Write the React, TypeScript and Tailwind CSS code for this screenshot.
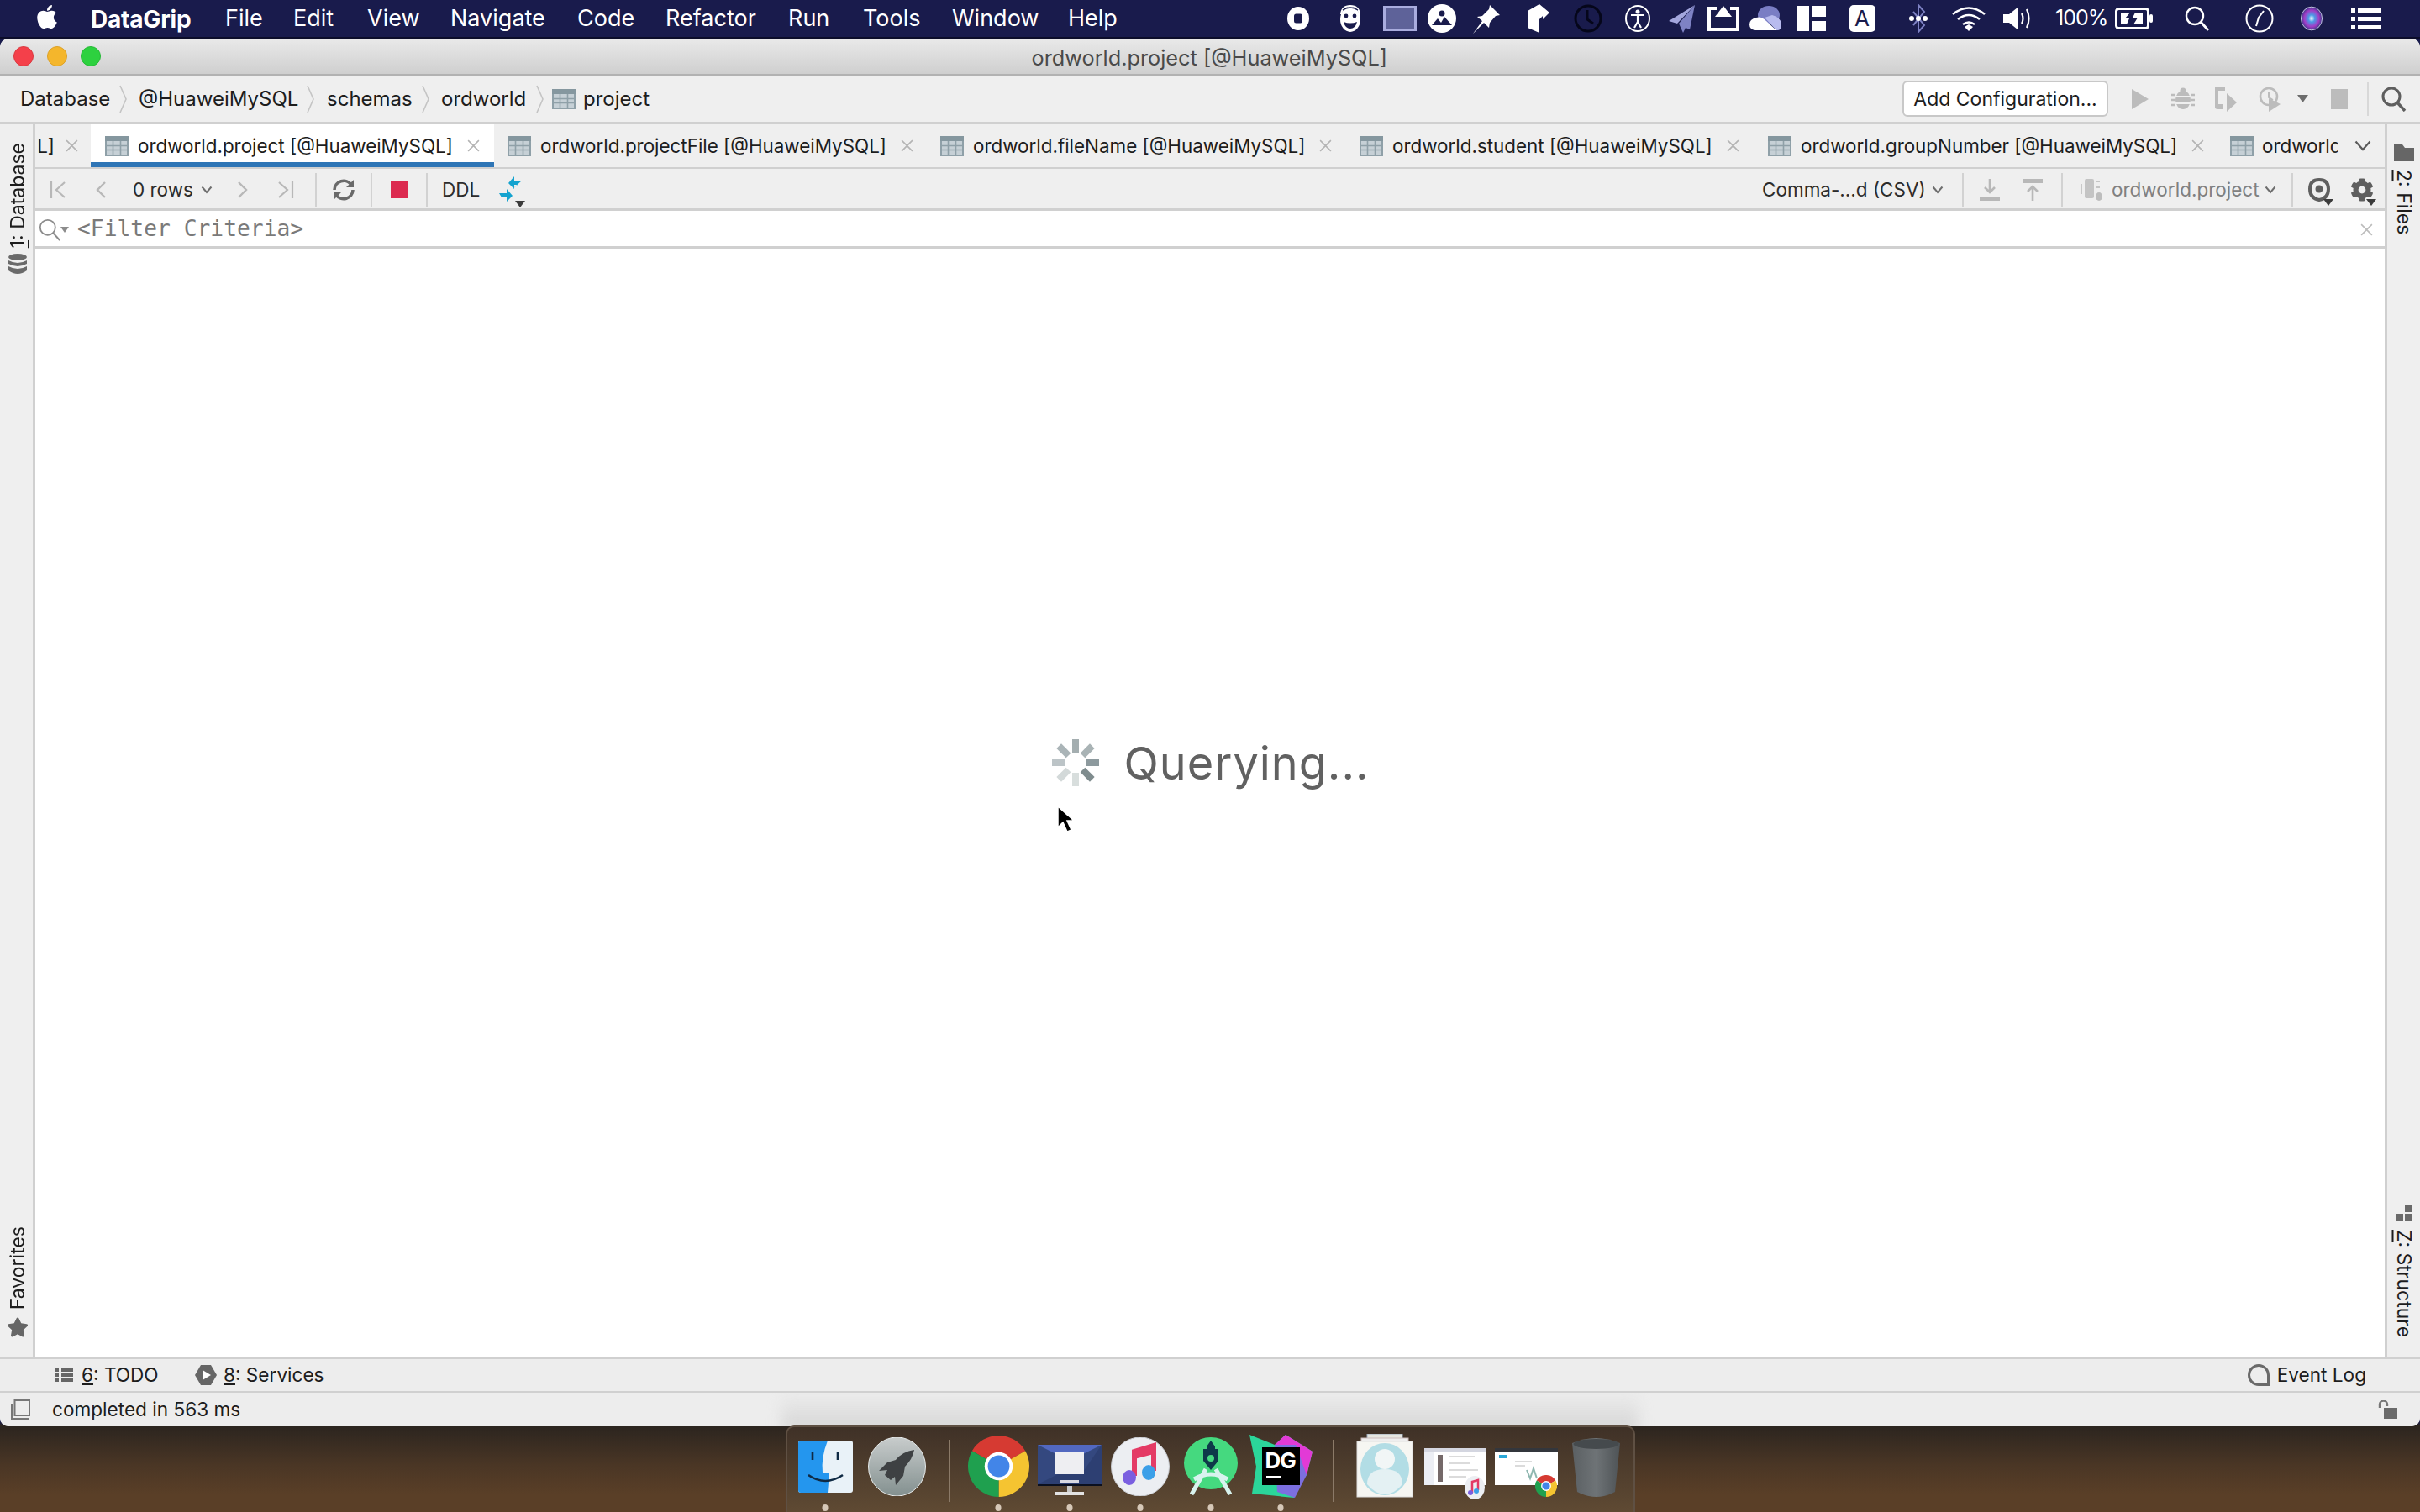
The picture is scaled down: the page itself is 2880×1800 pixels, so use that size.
import React from "react";
import { FaApple, FaStar, FaCog } from "react-icons/fa";

const TableIcon = () => (
  <svg width="28" height="24" viewBox="0 0 28 24" className="shrink-0">
    <rect width="28" height="24" fill="#c6d0d6" />
    <rect width="28" height="6" fill="#85979f" />
    <rect x="0" y="6" width="2" height="18" fill="#8fa0a8" />
    <rect x="26" y="6" width="2" height="18" fill="#8fa0a8" />
    <rect y="22" width="28" height="2" fill="#8fa0a8" />
    <path d="M2 11.5h24M2 16.5h24M9.5 6v16M18.5 6v16" stroke="#8fa0a8" strokeWidth="1.6" />
  </svg>
);
const Close = ({ c = "#b4b4b4" }: { c?: string }) => (
  <svg width="17" height="17" viewBox="0 0 16 16" className="shrink-0">
    <path d="M2 2l12 12M14 2L2 14" stroke={c} strokeWidth="1.5" />
  </svg>
);
const Chev = ({ c = "#6e6e6e" }: { c?: string }) => (
  <svg width="14" height="10" viewBox="0 0 14 10" className="shrink-0">
    <path d="M1.5 1.5L7 8l5.5-6.5" fill="none" stroke={c} strokeWidth="2" />
  </svg>
);
const Crumb = () => (
  <svg width="10" height="34" viewBox="0 0 10 34" className="shrink-0">
    <path d="M1 1l7 16-7 16" fill="none" stroke="#c4c4c4" strokeWidth="1.6" />
  </svg>
);
const Sep = () => <div className="w-[2px] h-[40px] bg-[#d2d2d2] shrink-0" />;
const Caret = () => (
  <svg width="12" height="8" viewBox="0 0 12 8" className="absolute right-[-3px] bottom-[-5px]">
    <path d="M0 0h12L6 8z" fill="#3c3c3c" />
  </svg>
);

function Tab({ w, label, active }: { w: string; label: string; active?: boolean }) {
  return (
    <div className={`${w} h-full shrink-0 flex items-center relative overflow-hidden ${active ? "bg-white pl-[17px]" : "pl-[16px]"}`}>
      <TableIcon />
      <span className="ml-[11px] whitespace-nowrap text-[22.4px] text-[#1d1d1d]">{label}</span>
      <div className="ml-[16px] shrink-0"><Close /></div>
      {active && <div className="absolute left-0 right-0 bottom-0 h-[6px] bg-[#2e75b6]" />}
    </div>
  );
}

const Slot = ({ w, children }: { w: string; children: React.ReactNode }) => (
  <div className={`${w} shrink-0 flex justify-center items-center`}>{children}</div>
);
const Magnifier = ({ s, c, w }: { s: number; c: string; w: number }) => (
  <svg width={s} height={s} viewBox="0 0 30 30" className="shrink-0">
    <circle cx="12" cy="12" r="10" fill="none" stroke={c} strokeWidth={w} />
    <path d="M19 19l9 10" fill="none" stroke={c} strokeWidth={w + 0.4} />
  </svg>
);

function Menu() {
  const items: [string, string][] = [
    ["File", "w-[81px]"], ["Edit", "w-[88px]"], ["View", "w-[99px]"], ["Navigate", "w-[151px]"], ["Code", "w-[105px]"],
    ["Refactor", "w-[146px]"], ["Run", "w-[89px]"], ["Tools", "w-[106px]"], ["Window", "w-[138px]"], ["Help", "w-[100px]"],
  ];
  return (
    <div className="h-[46px] shrink-0 bg-[#191b4c] border-b-2 border-[#0c0d2a] flex items-center text-white text-[27px] relative">
      <div className="w-[108px] pl-[40px] shrink-0 -mt-[5px]"><FaApple size={32} /></div>
      <div className="w-[160px] shrink-0 font-bold text-[28px] tracking-[-0.2px] pt-[1px]">DataGrip</div>
      {items.map(([t, w]) => <div key={t} className={`${w} shrink-0 pt-[1px]`}>{t}</div>)}
      <div className="w-[143px] shrink-0" />
      <Slot w="w-[62px]"><svg width="26" height="28" viewBox="0 0 26 28"><ellipse cx="13" cy="14" rx="13" ry="14" fill="#fff" /><rect x="8" y="8.5" width="10" height="11" rx="2.5" fill="#191b4c" /></svg></Slot>
      <Slot w="w-[62px]"><svg width="28" height="34" viewBox="0 0 28 34"><ellipse cx="14" cy="18" rx="12" ry="15" fill="#fff" /><path d="M3 12q1-10 11-10t11 10" fill="none" stroke="#fff" strokeWidth="2" /><path d="M5 7q9-6 18 0" fill="none" stroke="#191b4c" strokeWidth="1.5" /><circle cx="9" cy="14" r="2.4" fill="#191b4c" /><circle cx="19" cy="14" r="2.4" fill="#191b4c" /><path d="M6 21q8 3 16 0q-2 8-8 8t-8-8z" fill="#191b4c" /></svg></Slot>
      <Slot w="w-[56px]"><div className="w-[40px] h-[30px] bg-[#5e6299] border-[3px] border-[#a9acde]" /></Slot>
      <Slot w="w-[44px]"><svg width="34" height="34" viewBox="0 0 34 34"><circle cx="17" cy="17" r="17" fill="#fff" /><circle cx="17" cy="11" r="3.5" fill="#191b4c" /><path d="M5 25l7-8 4 5 4-7 9 10z" fill="#191b4c" /></svg></Slot>
      <Slot w="w-[62px]"><svg width="36" height="36" viewBox="0 0 36 36"><path d="M22 2l12 12-5 1-7 8-1 6-6-6-13 13 11-15-6-5 6-1 8-8z" fill="#fff" /></svg></Slot>
      <Slot w="w-[60px]"><svg width="28" height="34" viewBox="0 0 28 34"><path d="M16 0l12 10-8 8v-4l-4 4v16L2 28V8z" fill="#fff" /></svg></Slot>
      <Slot w="w-[60px]"><svg width="34" height="34" viewBox="0 0 34 34"><circle cx="17" cy="17" r="15" fill="none" stroke="#05061a" strokeWidth="3" /><path d="M16 7v11l7 5" fill="none" stroke="#05061a" strokeWidth="3" /></svg></Slot>
      <Slot w="w-[58px]"><svg width="30" height="32" viewBox="0 0 30 32"><ellipse cx="15" cy="16" rx="14" ry="15" fill="none" stroke="#fff" strokeWidth="2" /><circle cx="15" cy="8" r="2.5" fill="#fff" /><path d="M7 12h16M15 12v8M15 20l-4 7M15 20l4 7" fill="none" stroke="#fff" strokeWidth="2.2" /></svg></Slot>
      <Slot w="w-[48px]"><svg width="32" height="34" viewBox="0 0 32 34"><path d="M31 1L0 20l10 3z" fill="#a3a6dd" /><path d="M31 1L12 23l5 11 3-6 5 2z" fill="#7e82c4" /></svg></Slot>
      <Slot w="w-[50px]"><svg width="38" height="30" viewBox="0 0 38 30"><path d="M11 3H2v25h34V3h-9" fill="none" stroke="#fff" strokeWidth="4" /><path d="M19 0l10 13H9z" fill="#fff" /></svg></Slot>
      <Slot w="w-[52px]"><svg width="40" height="30" viewBox="0 0 40 30"><ellipse cx="23" cy="11" rx="13" ry="11" fill="#7a7ec4" /><path d="M7 29q-7-1-7-7t8-8q6-2 12 4l12 11z" fill="#fff" /><path d="M18 14l9-3q11 3 11 11t-6 7z" fill="#b8bbee" /></svg></Slot>
      <Slot w="w-[56px]"><div className="flex gap-[4px] h-[30px]"><div className="w-[14px] bg-white" /><div className="flex flex-col gap-[5px] w-[16px]"><div className="h-[13px] bg-white" /><div className="h-[12px] bg-white" /></div></div></Slot>
      <Slot w="w-[64px]"><div className="w-[31px] h-[32px] rounded-[5px] bg-white text-[#191b4c] text-[26px] leading-[32px] text-center">A</div></Slot>
      <Slot w="w-[70px]"><svg width="24" height="34" viewBox="0 0 24 34"><path d="M6 9l13 16-7 8V1l7 8L6 25" fill="none" stroke="#7e82c4" strokeWidth="2" /><circle cx="4" cy="17" r="3" fill="#fff" /><circle cx="12" cy="17" r="3" fill="#fff" /><circle cx="20" cy="17" r="3" fill="#fff" /></svg></Slot>
      <Slot w="w-[50px]"><svg width="42" height="32" viewBox="0 0 42 32"><path d="M2 11q19-15 38 0M8 17q13-10 26 0M14 23q7-5 14 0" fill="none" stroke="#fff" strokeWidth="2.6" /><path d="M16 26l5-3 5 3-5 5z" fill="#fff" /></svg></Slot>
      <Slot w="w-[66px]"><svg width="34" height="28" viewBox="0 0 34 28"><path d="M0 9h7l10-8v26L7 19H0z" fill="#fff" /><path d="M22 8q3 6 0 12M28 3q5 11 0 22" fill="none" stroke="#fff" strokeWidth="2.2" /></svg></Slot>
      <div className="ml-[12px] w-[61px] shrink-0 text-[25px] tracking-[-1px] whitespace-nowrap">100%</div>
      <div className="ml-[10px] w-[45px] shrink-0 flex">
        <svg width="45" height="26" viewBox="0 0 45 26"><rect x="1.5" y="1.5" width="38" height="23" rx="3" fill="none" stroke="#fff" strokeWidth="3" /><rect x="41" y="8" width="4" height="10" rx="2" fill="#fff" /><path d="M7 6h11l-6 7h5l-3 7H7zM33 6H24l-3 6h6l-5 8h11z" fill="#fff" /></svg>
      </div>
      <div className="ml-[28px] w-[50px] shrink-0 flex justify-center"><Magnifier s={30} c="#fff" w={2.4} /></div>
      <Slot w="w-[98px]"><svg width="34" height="34" viewBox="0 0 34 34"><circle cx="17" cy="17" r="15.5" fill="none" stroke="#fff" strokeWidth="2" /><path d="M13 26l3-10 6-8" fill="none" stroke="#fff" strokeWidth="2" /></svg></Slot>
      <Slot w="w-[26px]"><svg width="30" height="34" viewBox="0 0 30 34"><defs><radialGradient id="siri"><stop offset="0" stopColor="#f2f8ff" /><stop offset="0.3" stopColor="#4b9ae6" /><stop offset="0.7" stopColor="#a33bc6" /><stop offset="1" stopColor="#3c3a8a" /></radialGradient></defs><ellipse cx="15" cy="17" rx="14.5" ry="16" fill="url(#siri)" stroke="#d8d8f0" /></svg></Slot>
      <Slot w="w-[104px]"><svg width="36" height="26" viewBox="0 0 36 26"><path d="M0 1h5v5H0zM8 1h28v5H8zM0 11h5v5H0zM8 11h28v5H8zM0 21h5v5H0zM8 21h28v5H8z" fill="#fff" /></svg></Slot>
    </div>
  );
}

function Nav() {
  return (
    <div className="h-[58px] shrink-0 bg-[#efefef] border-b-[3px] border-[#d0d0d0] flex items-center text-[24px] text-[#1d1d1d] relative">
      <div className="w-[165px] pl-[24px] shrink-0 flex items-center justify-between pr-[13px]">Database<Crumb /></div>
      <div className="w-[224px] shrink-0 flex items-center justify-between pr-[14px]">@HuaweiMySQL<Crumb /></div>
      <div className="w-[136px] shrink-0 flex items-center justify-between pr-[13px]">schemas<Crumb /></div>
      <div className="w-[132px] shrink-0 flex items-center justify-between pr-[9px]">ordworld<Crumb /></div>
      <TableIcon />
      <div className="ml-[9px] w-[1570px] shrink-0">project</div>
      <div className="w-[245px] h-[43px] shrink-0 bg-white border-2 border-[#c8c8c8] rounded-[6px] flex items-center justify-center text-[23px] whitespace-nowrap pt-[1px]">Add Configuration...</div>
      <div className="ml-[28px] w-[47px] shrink-0"><svg width="20" height="24" viewBox="0 0 20 24"><path d="M0 0l20 12L0 24z" fill="#bcbcbc" /></svg></div>
      <div className="w-[52px] shrink-0"><svg width="28" height="28" viewBox="0 0 28 28"><ellipse cx="14" cy="15" rx="9" ry="11" fill="#bcbcbc" /><circle cx="14" cy="4" r="3.5" fill="#bcbcbc" /><path d="M5 11h18M5 19h18" stroke="#efefef" strokeWidth="2" /><path d="M0 9h5M23 9h5M0 15h5M23 15h5M0 21h5M23 21h5" stroke="#bcbcbc" strokeWidth="2.4" /></svg></div>
      <div className="w-[52px] shrink-0"><svg width="28" height="30" viewBox="0 0 28 30"><path d="M12 2H4q-3 0-3 4v14q0 4 3 4h6" fill="none" stroke="#bcbcbc" strokeWidth="6" /><path d="M14 8l12 11-12 11z" fill="#bcbcbc" /></svg></div>
      <div className="w-[46px] shrink-0"><svg width="30" height="30" viewBox="0 0 30 30"><circle cx="12" cy="12" r="10" fill="none" stroke="#bcbcbc" strokeWidth="2.6" /><path d="M12 6v7l5 3" fill="none" stroke="#bcbcbc" strokeWidth="2" /><path d="M12 14l14 7-14 9z" fill="#bcbcbc" /></svg></div>
      <div className="w-[40px] shrink-0"><svg width="13" height="9" viewBox="0 0 13 9"><path d="M0 0h13L6.5 9z" fill="#6c6c6c" /></svg></div>
      <div className="w-[20px] h-[24px] bg-[#bcbcbc] shrink-0" />
      <div className="ml-[23px] w-[2px] h-[40px] bg-[#d8d8d8] shrink-0" />
      <div className="ml-[15px] shrink-0"><Magnifier s={30} c="#5e5e5e" w={3} /></div>
    </div>
  );
}

function Tabs() {
  return (
    <div className="h-[53px] shrink-0 bg-[#efefef] border-b-[2px] border-[#d0d0d0] flex items-stretch relative overflow-visible">
      <div className="w-[66px] shrink-0 flex items-center text-[22.4px] text-[#1d1d1d] whitespace-nowrap justify-end pr-[14px] gap-[12px] overflow-hidden">L]<Close /></div>
      <Tab w="w-[480px]" active label="ordworld.project [@HuaweiMySQL]" />
      <Tab w="w-[515px]" label="ordworld.projectFile [@HuaweiMySQL]" />
      <Tab w="w-[499px]" label="ordworld.fileName [@HuaweiMySQL]" />
      <Tab w="w-[486px]" label="ordworld.student [@HuaweiMySQL]" />
      <Tab w="w-[549px]" label="ordworld.groupNumber [@HuaweiMySQL]" />
      <div className="flex-1 min-w-0 flex items-center pl-[17px] overflow-hidden">
        <TableIcon />
        <span className="ml-[10px] w-[90px] shrink-0 overflow-hidden whitespace-nowrap text-[22.4px] text-[#1d1d1d]">ordworld.x</span>
        <svg width="20" height="13" viewBox="0 0 20 13" className="ml-[20px] shrink-0"><path d="M1.5 1.5L10 11l8.5-9.5" fill="none" stroke="#5a5a5a" strokeWidth="2.2" /></svg>
      </div>
    </div>
  );
}

function Toolbar() {
  const g = "#b8b8b8";
  return (
    <div className="h-[50px] shrink-0 bg-[#efefef] border-b-[3px] border-[#d0d0d0] flex items-center text-[#2c2c2c] text-[22.5px] pr-[13px] pt-[2px]">
      <div className="ml-[17px] w-[54px] shrink-0"><svg width="20" height="22" viewBox="0 0 20 22"><path d="M2 1v20M18 2L8 11l10 9" fill="none" stroke={g} strokeWidth="2.2" /></svg></div>
      <div className="w-[45px] shrink-0"><svg width="14" height="22" viewBox="0 0 14 22"><path d="M12 2L3 11l9 9" fill="none" stroke={g} strokeWidth="2.4" /></svg></div>
      <div className="w-[81px] shrink-0 whitespace-nowrap">0 rows</div>
      <div className="w-[43px] shrink-0"><Chev /></div>
      <div className="w-[48px] shrink-0"><svg width="14" height="22" viewBox="0 0 14 22"><path d="M2 2l9 9-9 9" fill="none" stroke={g} strokeWidth="2.4" /></svg></div>
      <div className="w-[45px] shrink-0"><svg width="20" height="22" viewBox="0 0 20 22"><path d="M18 1v20M2 2l10 9-10 9" fill="none" stroke={g} strokeWidth="2.2" /></svg></div>
      <Sep />
      <div className="w-[64px] shrink-0 flex justify-center"><svg width="28" height="26" viewBox="0 0 28 26"><path d="M3 13a11 11 0 0 1 20-6M25 13a11 11 0 0 1-20 6" fill="none" stroke="#6a6a6a" strokeWidth="3.6" /><path d="M26 1v9h-9zM2 25v-9h9z" fill="#6a6a6a" /></svg></div>
      <Sep />
      <div className="w-[64px] shrink-0 flex justify-center"><div className="w-[21px] h-[20px] bg-[#dc2a50]" /></div>
      <Sep />
      <div className="ml-[17px] w-[68px] shrink-0">DDL</div>
      <div className="relative w-[28px] h-[32px] shrink-0">
        <svg width="28" height="30" viewBox="0 0 28 30"><path d="M27 5h-9V0l-7 8 7 7v-5h4l-6 5z" fill="#14a3cf" /><path d="M0 20h9v-5l7 8-7 7v-5H3z" fill="#14a3cf" /></svg>
        <Caret />
      </div>
      <div className="flex-1" />
      <div className="w-[202px] shrink-0 whitespace-nowrap">Comma-...d (CSV)</div>
      <div className="w-[36px] shrink-0"><Chev /></div>
      <Sep />
      <div className="ml-[19px] w-[51px] shrink-0"><svg width="24" height="26" viewBox="0 0 24 26"><path d="M0 21h24v5H0z" fill={g} /><path d="M12 0v15M6 10l6 6 6-6" fill="none" stroke={g} strokeWidth="2.6" /></svg></div>
      <div className="w-[46px] shrink-0"><svg width="24" height="26" viewBox="0 0 24 26"><path d="M0 0h24v5H0z" fill={g} /><path d="M12 26V10M6 15l6-6 6 6" fill="none" stroke={g} strokeWidth="2.6" /></svg></div>
      <Sep />
      <div className="ml-[21px] w-[37px] shrink-0"><svg width="28" height="26" viewBox="0 0 28 26"><path d="M1 6v12" stroke="#c8c8c8" strokeWidth="2" /><rect x="5" y="0" width="11" height="23" rx="2" fill="#c4c4c4" /><path d="M18 3h5M18 10h5" stroke="#c4c4c4" strokeWidth="2" /><ellipse cx="22" cy="21" rx="4" ry="5" fill="#bdbdbd" /></svg></div>
      <div className="w-[182px] shrink-0 whitespace-nowrap text-[#808080]">ordworld.project</div>
      <div className="w-[32px] shrink-0"><Chev /></div>
      <Sep />
      <div className="ml-[17px] relative w-[28px] h-[28px] shrink-0">
        <svg width="28" height="28" viewBox="0 0 28 28"><path d="M14 2q11 0 11 11t-11 13Q3 24 3 13T14 2z" fill="none" stroke="#5f5f5f" strokeWidth="4" /><circle cx="14" cy="13" r="4.5" fill="#5f5f5f" /></svg>
        <Caret />
      </div>
      <div className="ml-[23px] relative w-[28px] h-[28px] shrink-0 text-[#5f5f5f]">
        <FaCog size={28} />
        <Caret />
      </div>
    </div>
  );
}

function Filter() {
  return (
    <div className="h-[45px] shrink-0 bg-white border-b-[3px] border-[#d0d0d0] flex items-center pl-[4px] pr-[13px] pt-[2px]">
      <Magnifier s={27} c="#8c8c8c" w={2} />
      <svg width="10" height="7" viewBox="0 0 10 7" className="-ml-[1px] shrink-0"><path d="M0 0h10L5 7z" fill="#8c8c8c" /></svg>
      <span className="ml-[10px] font-['DejaVu_Sans_Mono',monospace] text-[26.3px] text-[#7a7a7a] whitespace-nowrap">&lt;Filter Criteria&gt;</span>
      <div className="flex-1" />
      <Close c="#bcbcbc" />
    </div>
  );
}

function Spinner() {
  const cols = ["#a4aeb0", "#a9b3b5", "#8d9a9e", "#7f8c8e", "#d8dedd", "#d3d9d9", "#bcc4c7", "#aab4b7"];
  return (
    <svg width="58" height="58" viewBox="-29 -29 58 58" className="shrink-0">
      {cols.map((c, i) => (
        <rect key={i} x="-4" y="-28" width="8" height="16" fill={c} transform={`rotate(${i * 45})`} />
      ))}
    </svg>
  );
}

const SideText = ({ children, flip }: { children: React.ReactNode; flip?: boolean }) => (
  <div className={`[writing-mode:vertical-rl] text-[23px] leading-[28px] text-[#1d1d1d] whitespace-nowrap ${flip ? "rotate-180" : ""}`}>{children}</div>
);

function LeftStrip() {
  return (
    <div className="w-[42px] shrink-0 bg-[#efefef] border-r-[3px] border-[#d0d0d0] flex flex-col items-center pt-[22px] pb-[23px] pl-[3px]">
      <SideText flip><u>1</u>: Database</SideText>
      <svg width="24" height="26" viewBox="0 0 24 26" className="mt-[7px]"><g fill="#6a6a6a"><ellipse cx="12" cy="4" rx="11" ry="4" /><path d="M1 8q11 6 22 0v4q-11 6-22 0zM1 15q11 6 22 0v5q-11 8-22 0z" /></g></svg>
      <div className="flex-1" />
      <SideText flip>Favorites</SideText>
      <div className="mt-[8px] text-[#666]"><FaStar size={26} /></div>
    </div>
  );
}
function RightStrip() {
  return (
    <div className="w-[42px] shrink-0 bg-[#efefef] border-l-[3px] border-[#d0d0d0] flex flex-col items-center pt-[24px] pb-[24px]">
      <svg width="24" height="20" viewBox="0 0 24 20"><path d="M0 0h10l3 4h11v16H0z" fill="#666" /></svg>
      <div className="mt-[10px]"><SideText><u>2</u>: Files</SideText></div>
      <div className="flex-1" />
      <svg width="18" height="18" viewBox="0 0 18 18" fill="#6a6a6a"><path d="M10 0h8v8h-8zM0 10h8v8H0zM10 10h8v8h-8z" /></svg>
      <div className="mt-[11px]"><SideText><u>Z</u>: Structure</SideText></div>
    </div>
  );
}

const ChromeIcon = ({ s }: { s: number }) => (
  <svg width={s} height={s} viewBox="0 0 48 48">
    <path d="M24 24L3.2 12A24 24 0 0 1 44.8 12z" fill="#d63a32" />
    <path d="M24 24L44.8 12A24 24 0 0 1 24 48z" fill="#f5c431" />
    <path d="M24 24L24 48A24 24 0 0 1 3.2 12z" fill="#1fa04f" />
    <circle cx="24" cy="24" r="11" fill="#fff" />
    <circle cx="24" cy="24" r="8.5" fill="#4285e8" />
  </svg>
);

function Dock() {
  const Vsep = ({ ml }: { ml: string }) => <div className={`${ml} mt-[15px] w-[2px] h-[74px] bg-[#8b7a68] shrink-0`} />;
  return (
    <div className="relative -mt-px w-[1011px] h-[103px] shrink-0 rounded-t-[10px] border-t-2 border-x-2 border-[#5f5043] bg-[linear-gradient(180deg,#3f3127,#5f4a33)] flex items-start">
      <div className="relative ml-[13px] mt-[16px] shrink-0">
        <svg width="65" height="62" viewBox="0 0 65 62"><rect width="65" height="62" rx="3" fill="#e9f2f8" /><path d="M0 3q0-3 3-3h32q-8 20-6 38h8l-2 24H3q-3 0-3-3z" fill="#2496ee" /><path d="M17 14v9M47 14v9" stroke="#0f2a44" strokeWidth="2.6" /><path d="M12 41q20 14 41 0" fill="none" stroke="#0f2a44" strokeWidth="2.6" /></svg>
        <div className="absolute left-1/2 -translate-x-1/2 top-[76px] w-[7px] h-[8px] rounded-full bg-[#d6c8b8]" />
      </div>
      <div className="ml-[18px] mt-[12px] shrink-0">
        <svg width="69" height="70" viewBox="0 0 69 70"><defs><linearGradient id="lp" x1="0" y1="0" x2="0" y2="1"><stop offset="0" stopColor="#c8cccc" /><stop offset="1" stopColor="#83908f" /></linearGradient></defs><ellipse cx="34.5" cy="35" rx="34" ry="35" fill="url(#lp)" stroke="#e8ecec" /><path d="M55 15q-14 2-22 12l-10 3-10 10 10-1-3 6 7 6 5-4 1 10 9-11 2-11q9-9 11-20z" fill="#3e4143" /></svg>
      </div>
      <Vsep ml="ml-[27px]" />
      <div className="relative ml-[21px] mt-[10px] shrink-0">
        <ChromeIcon s={73} />
        <div className="absolute left-1/2 -translate-x-1/2 top-[82px] w-[7px] h-[8px] rounded-full bg-[#d6c8b8]" />
      </div>
      <div className="relative ml-[10px] mt-[21px] shrink-0">
        <svg width="76" height="60" viewBox="0 0 76 60"><rect width="76" height="49" fill="#0b1020" /><rect x="0" y="0" width="76" height="47" fill="#34487f" /><path d="M0 0h76L52 12H24z" fill="#5268c0" /><path d="M0 47l24-12h28l24-35v47z" fill="#2d3f72" /><rect x="21" y="8" width="34" height="27" fill="#eeeef2" /><rect x="27" y="42" width="22" height="4" fill="#d8d8e2" /><rect x="35" y="49" width="6" height="7" fill="#c9c9c9" /><rect x="21" y="56" width="34" height="4" fill="#e2e2e2" /></svg>
        <div className="absolute left-1/2 -translate-x-1/2 top-[71px] w-[7px] h-[8px] rounded-full bg-[#d6c8b8]" />
      </div>
      <div className="relative ml-[11px] mt-[12px] shrink-0">
        <svg width="70" height="70" viewBox="0 0 70 70"><ellipse cx="35" cy="35" rx="34.5" ry="35" fill="#eceef2" stroke="#c9ccd2" /><path d="M28 46V17l23-7v30" fill="none" stroke="#e43b66" strokeWidth="6" /><path d="M28 17l23-7v10l-23 6z" fill="#e43b66" /><ellipse cx="22" cy="48" rx="8" ry="9" fill="#7a5fe0" /><ellipse cx="45" cy="42" rx="8" ry="9" fill="#3b9fe8" /></svg>
        <div className="absolute left-1/2 -translate-x-1/2 top-[80px] w-[7px] h-[8px] rounded-full bg-[#d6c8b8]" />
      </div>
      <div className="relative ml-[17px] mt-[12px] shrink-0">
        <svg width="64" height="70" viewBox="0 0 64 70"><ellipse cx="32" cy="31" rx="32" ry="31" fill="#45d97f" /><path d="M32 4l5 7v3h4v14l-9 11-9-11V14h4v-3z" fill="#0e3a4a" /><circle cx="32" cy="25" r="4" fill="#45d97f" /><path d="M26 38L9 68M38 38l17 30M12 50q20-12 40 0" fill="none" stroke="#d8f3ee" strokeWidth="5" /></svg>
        <div className="absolute left-1/2 -translate-x-1/2 top-[80px] w-[7px] h-[8px] rounded-full bg-[#d6c8b8]" />
      </div>
      <div className="relative ml-[14px] mt-[9px] shrink-0 w-[75px] h-[75px]">
        <svg width="75" height="75" viewBox="0 0 75 75"><path d="M0 0l30 12 13-12 32 20-7 28-14 12L53 75 3 70l5-32z" fill="#2bd69a" /><path d="M30 12L43 0l32 20-7 28-14-18z" fill="#e23ad6" /><path d="M30 12h25l13 36-14 27L33 68z" fill="#7c6fe0" /><rect x="15" y="15" width="45" height="45" fill="#000" /><rect x="20" y="49" width="17" height="3" fill="#fff" /></svg>
        <span className="absolute left-[19px] top-[15px] text-[26px] leading-[32px] font-bold text-white tracking-[-1px]">DG</span>
        <div className="absolute left-1/2 -translate-x-1/2 top-[83px] w-[7px] h-[8px] rounded-full bg-[#d6c8b8]" />
      </div>
      <Vsep ml="ml-[24px]" />
      <div className="ml-[26px] mt-[8px] shrink-0">
        <svg width="68" height="76" viewBox="0 0 68 76"><rect x="13" y="0" width="42" height="9" fill="#e6e6e0" stroke="#9ab" /><rect x="6" y="5" width="56" height="9" fill="#eee" stroke="#cbb" /><rect x="1" y="9" width="66" height="66" fill="#f6f6f2" stroke="#ddd" /><ellipse cx="34" cy="42" rx="29" ry="31" fill="#b2dde5" /><circle cx="34" cy="30" r="12" fill="#f1f6f6" /><path d="M13 60q0-18 21-18t21 18q-10 12-21 12T13 60z" fill="#e4f1f3" /></svg>
      </div>
      <div className="relative ml-[13px] mt-[25px] shrink-0 w-[74px] h-[44px] bg-white">
        <svg width="74" height="44" viewBox="0 0 74 44" className="absolute inset-0"><rect width="74" height="4" fill="#d4d6e0" /><rect x="0" y="4" width="12" height="40" fill="#eceef4" /><path d="M16 8h6v32h-6z" fill="#3a2a2a" opacity=".7" /><path d="M30 10h30M30 18h24M30 26h34M30 34h20" stroke="#d0d0d0" strokeWidth="1.5" /></svg>
        <div className="absolute left-[48px] top-[33px]"><svg width="24" height="28" viewBox="0 0 24 28"><ellipse cx="12" cy="14" rx="12" ry="14" fill="#eceef2" /><path d="M9 20V7l7-2v12" fill="none" stroke="#e43b66" strokeWidth="2.5" /><circle cx="7" cy="20" r="3" fill="#7a5fe0" /><circle cx="14" cy="18" r="3" fill="#3b9fe8" /></svg></div>
      </div>
      <div className="relative ml-[10px] mt-[25px] shrink-0 w-[75px] h-[44px] bg-white">
        <svg width="75" height="44" viewBox="0 0 75 44" className="absolute inset-0"><rect width="75" height="4" fill="#33363c" /><rect x="5" y="8" width="9" height="4" fill="#2aa8d8" /><path d="M24 16h20M24 21h12" stroke="#cfcfcf" strokeWidth="1.5" /><path d="M38 26l4 10 4-12 4 12" fill="none" stroke="#8fb7b0" strokeWidth="2" /></svg>
        <div className="absolute left-[48px] top-[32px]"><ChromeIcon s={26} /></div>
      </div>
      <div className="ml-[17px] mt-[13px] shrink-0">
        <svg width="57" height="71" viewBox="0 0 57 71"><defs><linearGradient id="tr" x1="0" y1="0" x2="1" y2="0"><stop offset="0" stopColor="#5b6063" /><stop offset="0.5" stopColor="#6e7376" /><stop offset="1" stopColor="#4e5356" /></linearGradient></defs><path d="M0 6q28-12 57 0L51 64q-22 12-45 0z" fill="url(#tr)" /><ellipse cx="28.5" cy="7" rx="27" ry="6" fill="#454a4d" /></svg>
      </div>
    </div>
  );
}

export default function App() {
  return (
    <div className="w-[2880px] h-[1800px] overflow-hidden flex flex-col font-[Inter,sans-serif] bg-[linear-gradient(180deg,#191b4c_0,#191b4c_94%,#2d2620_94.3%,#5a3f27_100%)]">
      <Menu />
      <div className="h-[1652px] shrink-0 flex flex-col rounded-[10px] overflow-hidden bg-[#efefef] relative">
        <div className="h-[44px] shrink-0 bg-[linear-gradient(180deg,#e9e9e9,#cfcfcf)] border-b-2 border-[#b2b2b2] flex items-center justify-between pl-[16px] pr-[1229px]">
          <div className="flex gap-[16px] w-[1210px] shrink-0">
            <div className="w-[24px] h-[24px] rounded-full bg-[#f4404a] border border-[#d93a40]" />
            <div className="w-[24px] h-[24px] rounded-full bg-[#f4b62c] border border-[#dca128]" />
            <div className="w-[24px] h-[24px] rounded-full bg-[#2dd13f] border border-[#28b938]" />
          </div>
          <div className="whitespace-nowrap text-[25.3px] text-[#4a4a4a] pt-[3px]">ordworld.project [@HuaweiMySQL]</div>
        </div>
        <Nav />
        <div className="flex-1 flex min-h-0">
          <LeftStrip />
          <div className="flex-1 min-w-0 flex flex-col">
            <Tabs />
            <Toolbar />
            <Filter />
            <div className="flex-1 bg-white relative flex items-center justify-center pb-[96px]">
              <Spinner />
              <span className="ml-[29px] text-[54px] text-[#616161] tracking-[1px] whitespace-nowrap">Querying...</span>
              <svg width="22" height="34" viewBox="0 0 22 34" className="absolute left-[1216px] top-[663px]">
                <path d="M1 1v25l6-6 5 11 5-2-5-11h8z" fill="#000" stroke="#fff" strokeWidth="1.5" />
              </svg>
            </div>
          </div>
          <RightStrip />
        </div>
        <div className="h-[42px] shrink-0 bg-[#ededed] border-y-2 border-[#d0d0d0] flex items-center text-[22.6px] text-[#1d1d1d]">
          <svg width="21" height="16" viewBox="0 0 21 16" className="ml-[66px] shrink-0"><path d="M0 0h4v4H0zM7 0h14v4H7zM0 6h4v4H0zM7 6h14v4H7zM0 12h4v4H0zM7 12h14v4H7z" fill="#666" /></svg>
          <span className="ml-[10px] w-[135px] whitespace-nowrap"><u>6</u>: TODO</span>
          <svg width="26" height="24" viewBox="0 0 26 24" className="shrink-0"><path d="M7 0h12l7 12-7 12H7L0 12z" fill="#666" /><path d="M9 6l10 6-10 6z" fill="#fff" /></svg>
          <span className="ml-[8px] whitespace-nowrap"><u>8</u>: Services</span>
          <div className="flex-1" />
          <svg width="26" height="26" viewBox="0 0 26 26" className="shrink-0"><path d="M13 1.5a11.5 11.5 0 1 0 0 23h11.5V13A11.5 11.5 0 0 0 13 1.5z" fill="none" stroke="#6a6a6a" strokeWidth="3" /></svg>
          <span className="ml-[9px] mr-[64px] whitespace-nowrap">Event Log</span>
        </div>
        <div className="h-[40px] shrink-0 bg-[#ededed] flex items-center text-[22.6px] text-[#1d1d1d] relative overflow-hidden">
          <svg width="24" height="24" viewBox="0 0 24 24" className="ml-[12px] shrink-0"><path d="M2 6v17h20" fill="none" stroke="#777" strokeWidth="2" /><rect x="5.5" y="1" width="17.5" height="18" fill="none" stroke="#777" strokeWidth="2" /></svg>
          <span className="ml-[26px] whitespace-nowrap">completed in 563 ms</span>
          <div className="flex-1" />
          <svg width="23" height="23" viewBox="0 0 23 23" className="mr-[27px] shrink-0"><path d="M2 9V5a4.5 4.5 0 0 1 9 0v2" fill="none" stroke="#777" strokeWidth="2.4" /><rect x="7" y="9" width="16" height="13" fill="#6a6a6a" /></svg>
          <div className="absolute left-[930px] right-[930px] top-0 bottom-[-6px] blur-sm bg-[linear-gradient(180deg,rgba(214,214,214,0),rgba(212,212,212,1))]" />
        </div>
      </div>
      <div className="flex-1 flex justify-center bg-[linear-gradient(180deg,#2c251f,#4a3625_45%,#5a3f27_80%)] relative z-10">
        <Dock />
      </div>
    </div>
  );
}
